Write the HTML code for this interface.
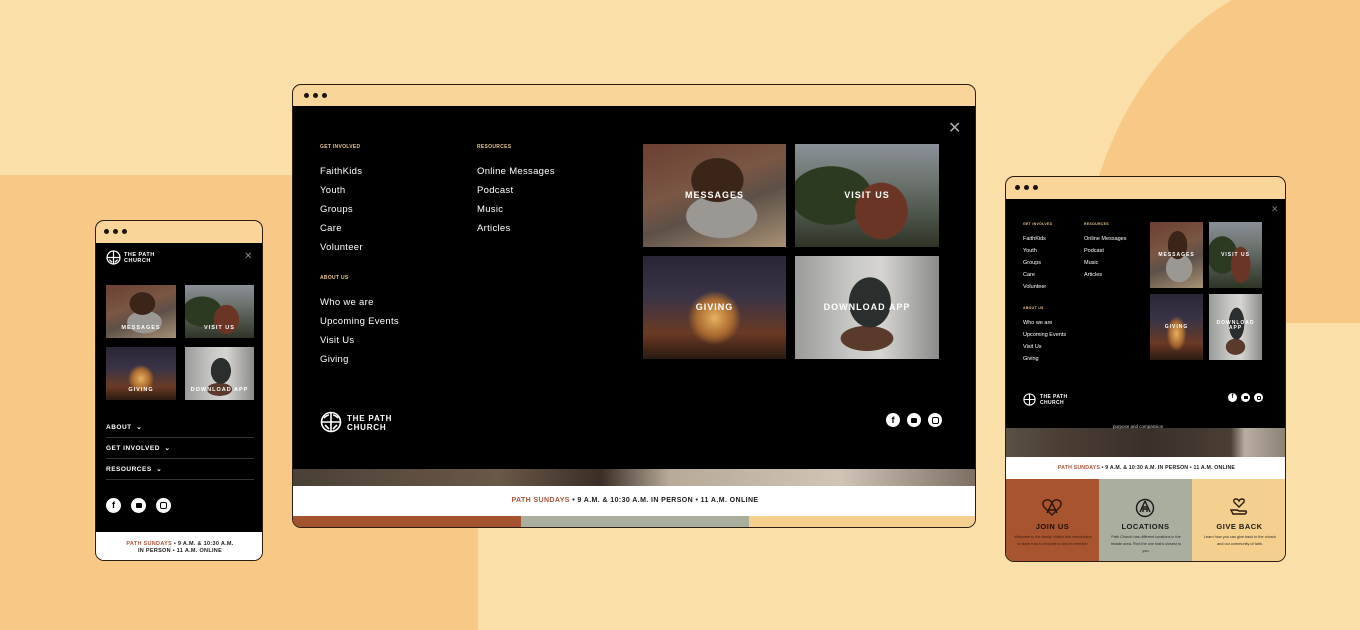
<!DOCTYPE html>
<html><head><meta charset="utf-8"><style>
*{margin:0;padding:0;box-sizing:border-box}
body{width:1360px;height:630px;overflow:hidden;background:#fadfa9;font-family:"Liberation Sans",sans-serif;position:relative}
.a{position:absolute}
.win{position:absolute;border:1.5px solid #2b1d12;border-radius:9px;overflow:hidden;background:#f9d59a}
.dots{position:absolute;display:flex;gap:4px}
.dots i{width:5px;height:5px;border-radius:50%;background:#1a120c;display:block}
.blk{position:absolute;background:#000}
.t{position:absolute;color:#fff;white-space:nowrap}
.h{position:absolute;color:#e8c48e;font-weight:bold;white-space:nowrap;letter-spacing:.3px}
.tile{position:absolute;overflow:hidden}
.tile span{position:absolute;left:0;right:0;text-align:center;color:#fff;font-weight:bold;letter-spacing:1px}
.img1{background:radial-gradient(ellipse 30% 35% at 52% 35%,#3b2418 0 60%,transparent 62%),radial-gradient(ellipse 35% 30% at 55% 70%,#9b9893 0 70%,transparent 72%),linear-gradient(160deg,#6a4032 0%,#7a5644 40%,#5d5048 60%,#a89276 100%)}
.img2{background:radial-gradient(ellipse 30% 45% at 60% 65%,#6b3526 0 60%,transparent 62%),radial-gradient(ellipse 40% 40% at 25% 50%,#2c3a22 0 70%,transparent 72%),linear-gradient(180deg,#8a9098 0%,#6e7570 35%,#2e3526 100%)}
.img3{background:radial-gradient(ellipse 25% 35% at 50% 60%,#e8b060 0,#a86a30 50%,transparent 75%),linear-gradient(180deg,#2a2536 0%,#3b3446 40%,#6a3a24 75%,#2a1a12 100%)}
.img4{background:radial-gradient(ellipse 18% 30% at 52% 45%,#2a2e2c 0 80%,transparent 82%),radial-gradient(ellipse 30% 20% at 50% 80%,#5a3a2a 0 60%,transparent 62%),linear-gradient(90deg,#9a9c9a,#c9c9c6 40%,#d6d4d0 60%,#8a8c8a)}
.soc{position:absolute;border-radius:50%;background:#fff;color:#000;font-weight:bold;text-align:center}
.ban{position:absolute;background:#fff;text-align:center;font-weight:bold;color:#1a1a1a;white-space:nowrap}
.ban b{color:#a9553a}
</style></head><body>
<!-- background shapes -->
<div class="a" style="left:0;top:175px;width:478px;height:455px;background:#f8c886"></div>
<div class="a" style="left:1080px;top:-30px;width:400px;height:353px;background:#f8c886;border-top-left-radius:260px 330px"></div>

<!-- DESKTOP -->
<div class="win" style="left:292px;top:84px;width:684px;height:444px">
  <div class="dots" style="left:11px;top:8px"><i></i><i></i><i></i></div>
  <div class="blk" style="left:0;top:21px;width:684px;height:363px"></div>
  <div class="a" style="left:0;top:384px;width:684px;height:17px;background:linear-gradient(90deg,#4a4036,#6a5848 30%,#3a2e26 45%,#b8a998 55%,#cfc4b6 80%,#7a6e62)"></div>
  <div class="ban" style="left:0;top:401px;width:684px;height:30px;font-size:7px;line-height:30px;letter-spacing:.4px"><b>PATH SUNDAYS</b> • 9 A.M. &amp; 10:30 A.M. IN PERSON • 11 A.M. ONLINE</div>
  <div class="a" style="left:0;top:431px;width:228px;height:13px;background:#a4532f"></div>
  <div class="a" style="left:228px;top:431px;width:228px;height:13px;background:#aaae9d"></div>
  <div class="a" style="left:456px;top:431px;width:228px;height:13px;background:#f4cf8e"></div>
  <div class="t" style="left:655px;top:33px;font-size:16px;color:#aaa;font-weight:100">✕</div>
  <div class="h" style="left:27px;top:59px;font-size:5px">GET INVOLVED</div>
  <div class="h" style="left:184px;top:59px;font-size:5px">RESOURCES</div>
  <div class="t" style="left:27px;top:77px;font-size:9.5px;line-height:19px;letter-spacing:.3px">FaithKids<br>Youth<br>Groups<br>Care<br>Volunteer</div>
  <div class="t" style="left:184px;top:77px;font-size:9.5px;line-height:19px;letter-spacing:.3px">Online Messages<br>Podcast<br>Music<br>Articles</div>
  <div class="h" style="left:27px;top:190px;font-size:5px">ABOUT US</div>
  <div class="t" style="left:27px;top:208px;font-size:9.5px;line-height:19px;letter-spacing:.3px">Who we are<br>Upcoming Events<br>Visit Us<br>Giving</div>
  <div class="tile img1" style="left:350px;top:59px;width:143px;height:103px"><span style="top:46px;font-size:9px">MESSAGES</span></div>
  <div class="tile img2" style="left:502px;top:59px;width:144px;height:103px"><span style="top:46px;font-size:9px">VISIT US</span></div>
  <div class="tile img3" style="left:350px;top:171px;width:143px;height:103px"><span style="top:46px;font-size:9px">GIVING</span></div>
  <div class="tile img4" style="left:502px;top:171px;width:144px;height:103px"><span style="top:46px;font-size:9px">DOWNLOAD APP</span></div>
  <svg class="a" style="left:27px;top:326px" width="22" height="22" viewBox="0 0 22 22" fill="none" stroke="#fff" stroke-width="1.6"><circle cx="11" cy="11" r="9.5"/><path d="M11 1.5V20.5M1.5 11H20.5M4 7Q7 4 9 4M18 7Q15 4 13 4M5 14L9 18M17 14L13 18"/></svg>
  <div class="t" style="left:54px;top:329px;font-size:8px;line-height:9px;font-weight:bold;letter-spacing:.8px">THE PATH<br>CHURCH</div>
  <div class="soc" style="left:593px;top:328px;width:14px;height:14px;font-size:9px;line-height:14px">f</div>
  <div class="soc" style="left:614px;top:328px;width:14px;height:14px"><i class="a" style="left:4px;top:4.5px;width:6px;height:5px;background:#000;border-radius:1px"></i></div>
  <div class="soc" style="left:635px;top:328px;width:14px;height:14px"><i class="a" style="left:3.5px;top:3.5px;width:7px;height:7px;border:1px solid #000;border-radius:2px"></i></div>
</div>

<!-- MOBILE -->
<div class="win" style="left:95px;top:220px;width:168px;height:341px">
  <div class="dots" style="left:8px;top:8px"><i></i><i></i><i></i></div>
  <div class="blk" style="left:0;top:22px;width:168px;height:289px"></div>
  <svg class="a" style="left:10px;top:29px" width="15" height="15" viewBox="0 0 22 22" fill="none" stroke="#fff" stroke-width="1.8"><circle cx="11" cy="11" r="9.5"/><path d="M11 1.5V20.5M1.5 11H20.5M5 14L9 18M17 14L13 18"/></svg>
  <div class="t" style="left:28px;top:31px;font-size:5.5px;line-height:6px;font-weight:bold;letter-spacing:.5px">THE PATH<br>CHURCH</div>
  <div class="t" style="left:148px;top:30px;font-size:10px;color:#888">✕</div>
  <div class="tile img1" style="left:10px;top:64px;width:70px;height:53px"><span style="top:40px;font-size:5.5px">MESSAGES</span></div>
  <div class="tile img2" style="left:89px;top:64px;width:69px;height:53px"><span style="top:40px;font-size:5.5px">VISIT US</span></div>
  <div class="tile img3" style="left:10px;top:126px;width:70px;height:53px"><span style="top:40px;font-size:5.5px">GIVING</span></div>
  <div class="tile img4" style="left:89px;top:126px;width:69px;height:53px"><span style="top:40px;font-size:5.5px">DOWNLOAD APP</span></div>
  <div class="t" style="left:10px;top:202px;font-size:6.5px;font-weight:bold;letter-spacing:.5px">ABOUT &nbsp;⌄</div>
  <div class="a" style="left:10px;top:216px;width:148px;height:1px;background:#333"></div>
  <div class="t" style="left:10px;top:223px;font-size:6.5px;font-weight:bold;letter-spacing:.5px">GET INVOLVED &nbsp;⌄</div>
  <div class="a" style="left:10px;top:237px;width:148px;height:1px;background:#333"></div>
  <div class="t" style="left:10px;top:244px;font-size:6.5px;font-weight:bold;letter-spacing:.5px">RESOURCES &nbsp;⌄</div>
  <div class="a" style="left:10px;top:258px;width:148px;height:1px;background:#333"></div>
  <div class="soc" style="left:10px;top:277px;width:15px;height:15px;font-size:9px;line-height:15px">f</div>
  <div class="soc" style="left:35px;top:277px;width:15px;height:15px"><i class="a" style="left:4.5px;top:5px;width:6px;height:5px;background:#000;border-radius:1px"></i></div>
  <div class="soc" style="left:60px;top:277px;width:15px;height:15px"><i class="a" style="left:4px;top:4px;width:7px;height:7px;border:1px solid #000;border-radius:2px"></i></div>
  <div class="ban" style="left:0;top:311px;width:168px;height:30px;font-size:5.5px;line-height:6.5px;padding-top:9px;letter-spacing:.3px"><b>PATH SUNDAYS</b> • 9 A.M. &amp; 10:30 A.M.<br>IN PERSON • 11 A.M. ONLINE</div>
</div>

<!-- TABLET -->
<div class="win" style="left:1005px;top:176px;width:281px;height:386px">
  <div class="dots" style="left:9px;top:8px"><i></i><i></i><i></i></div>
  <div class="blk" style="left:0;top:22px;width:281px;height:229px"></div>
  <div class="a" style="left:0;top:251px;width:281px;height:29px;background:linear-gradient(90deg,#5a5046,#4a3e34 20%,#3a302a 50%,#4a3e34 80%,#b8ada0 85%,#8a8074)"></div>
  <div class="t" style="left:107px;top:247px;font-size:4.5px;color:#ccc">purpose and compassion</div>
  <div class="ban" style="left:0;top:280px;width:281px;height:22px;font-size:5.2px;line-height:22px;letter-spacing:.2px"><b>PATH SUNDAYS</b> • 9 A.M. &amp; 10:30 A.M. IN PERSON • 11 A.M. ONLINE</div>
  <div class="a" style="left:0;top:302px;width:93px;height:84px;background:#a8552f"></div>
  <div class="a" style="left:93px;top:302px;width:93px;height:84px;background:#a9ae9e"></div>
  <div class="a" style="left:186px;top:302px;width:95px;height:84px;background:#f4cf8d"></div>
  <svg class="a" style="left:36px;top:321px" width="20" height="18" viewBox="0 0 20 18" fill="none" stroke="#2a140c" stroke-width="1.4"><path d="M10 17L2 9Q-1 4 4 2Q8 1 10 5Q12 1 16 2Q21 4 18 9Z"/><path d="M10 5L5 15M10 5L15 15M7 12H13"/></svg>
  <svg class="a" style="left:129px;top:321px" width="20" height="20" viewBox="0 0 20 20" fill="none" stroke="#1a1a1a" stroke-width="1.4"><circle cx="10" cy="10" r="8.5"/><path d="M10 3L5 14M10 3L15 14M7 9H13M8 14V11H12V14"/></svg>
  <svg class="a" style="left:223px;top:320px" width="20" height="20" viewBox="0 0 20 20" fill="none" stroke="#2a1a0c" stroke-width="1.4"><path d="M10 10L5 5Q4 2 7 2Q9 2 10 4Q11 2 13 2Q16 2 15 5Z"/><path d="M2 13H7Q9 13 10 14H17Q18 16 16 17H4Z"/></svg>
  <div class="a" style="left:0;top:345px;width:93px;text-align:center;font-size:7.5px;font-weight:bold;color:#1a0d06;letter-spacing:.5px">JOIN US</div>
  <div class="a" style="left:93px;top:345px;width:93px;text-align:center;font-size:7.5px;font-weight:bold;color:#1a1a1a;letter-spacing:.5px">LOCATIONS</div>
  <div class="a" style="left:186px;top:345px;width:95px;text-align:center;font-size:7.5px;font-weight:bold;color:#1a1a1a;letter-spacing:.5px">GIVE BACK</div>
  <div class="a" style="left:8px;top:357px;width:78px;text-align:center;font-size:3.8px;line-height:7px;color:#3a1a0c">Welcome to the family. Watch this introduction to learn how to become a church member.</div>
  <div class="a" style="left:102px;top:357px;width:76px;text-align:center;font-size:3.8px;line-height:7px;color:#2a2a2a">Path Church has different locations in the tristate area. Find the one that's closest to you.</div>
  <div class="a" style="left:196px;top:357px;width:76px;text-align:center;font-size:3.8px;line-height:7px;color:#2a2a2a">Learn how you can give back to the church and our community of faith.</div>
  <div class="t" style="left:265px;top:27px;font-size:9px;color:#777">✕</div>
  <div class="h" style="left:17px;top:45px;font-size:3.5px">GET INVOLVED</div>
  <div class="h" style="left:78px;top:45px;font-size:3.5px">RESOURCES</div>
  <div class="t" style="left:17px;top:56px;font-size:5.5px;line-height:12px">FaithKids<br>Youth<br>Groups<br>Care<br>Volunteer</div>
  <div class="t" style="left:78px;top:56px;font-size:5.5px;line-height:12px">Online Messages<br>Podcast<br>Music<br>Articles</div>
  <div class="h" style="left:17px;top:129px;font-size:3.5px">ABOUT US</div>
  <div class="t" style="left:17px;top:140px;font-size:5.5px;line-height:12px">Who we are<br>Upcoming Events<br>Visit Us<br>Giving</div>
  <div class="tile img1" style="left:144px;top:45px;width:53px;height:66px"><span style="top:30px;font-size:5px">MESSAGES</span></div>
  <div class="tile img2" style="left:203px;top:45px;width:53px;height:66px"><span style="top:30px;font-size:5px">VISIT US</span></div>
  <div class="tile img3" style="left:144px;top:117px;width:53px;height:66px"><span style="top:30px;font-size:5px">GIVING</span></div>
  <div class="tile img4" style="left:203px;top:117px;width:53px;height:66px"><span style="top:27px;font-size:5px;line-height:5px">DOWNLOAD<br>APP</span></div>
  <svg class="a" style="left:17px;top:216px" width="13" height="13" viewBox="0 0 22 22" fill="none" stroke="#fff" stroke-width="1.8"><circle cx="11" cy="11" r="9.5"/><path d="M11 1.5V20.5M1.5 11H20.5"/></svg>
  <div class="t" style="left:34px;top:218px;font-size:5px;line-height:5.5px;font-weight:bold;letter-spacing:.4px">THE PATH<br>CHURCH</div>
  <div class="soc" style="left:222px;top:216px;width:9px;height:9px;font-size:6px;line-height:9px">f</div>
  <div class="soc" style="left:235px;top:216px;width:9px;height:9px"><i class="a" style="left:2.5px;top:3px;width:4px;height:3px;background:#000"></i></div>
  <div class="soc" style="left:248px;top:216px;width:9px;height:9px"><i class="a" style="left:2.5px;top:2.5px;width:4px;height:4px;border:1px solid #000;border-radius:1px"></i></div>
</div>
</body></html>
